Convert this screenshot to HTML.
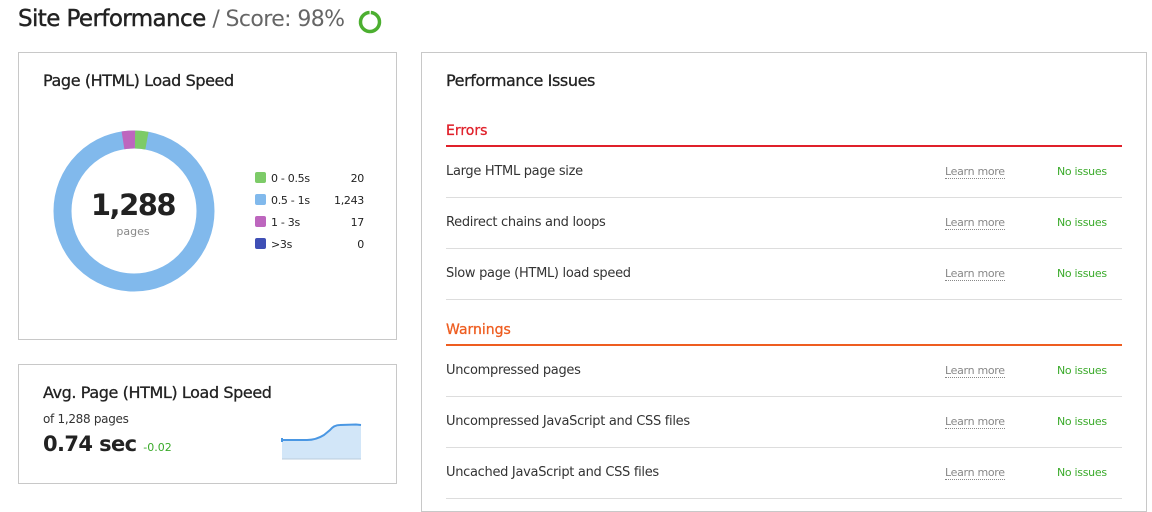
<!DOCTYPE html>
<html><head><meta charset="utf-8"><style>
*{margin:0;padding:0;box-sizing:border-box}
body{width:1152px;height:499px;overflow:hidden;background:#fff;font-family:"DejaVu Sans","Liberation Sans",sans-serif;color:#222;position:relative}
.a{position:absolute;white-space:nowrap}
.box{position:absolute;border:1px solid #c8c8c8;background:#fff}
.sep{position:absolute;left:446px;width:676px;height:1px;background:#ddd}
.lbl{position:absolute;left:446px;font-size:13px;color:#333;letter-spacing:-0.3px}
.lm{position:absolute;left:945px;font-size:11px;color:#888;border-bottom:1px dotted #888;line-height:13px;letter-spacing:-0.3px}
.ni{position:absolute;left:1057px;font-size:11px;color:#3aaa2a;letter-spacing:-0.3px}
</style></head><body>
<div class="a" style="left:18px;top:6px;font-size:23px;color:#222;letter-spacing:-0.6px;-webkit-text-stroke:0.4px #222">Site Performance <span style="color:#666;font-size:22px;-webkit-text-stroke:0">/ Score: 98%</span></div>
<svg class="a" style="left:357px;top:9px" width="26" height="26"><circle cx="13" cy="13" r="9.5" fill="none" stroke="#4caf30" stroke-width="3.5" stroke-dasharray="58 2" transform="rotate(-85 13 13)"/></svg>

<div class="box" style="left:18px;top:52px;width:379px;height:288px"></div>
<div class="a" style="left:43px;top:71px;font-size:16px;letter-spacing:-0.4px;-webkit-text-stroke:0.3px #222">Page (HTML) Load Speed</div>
<svg class="a" style="left:53px;top:130px" width="162" height="162">
<g transform="rotate(-90 81 81)">
<circle cx="81" cy="81" r="71.5" fill="none" stroke="#81b9ec" stroke-width="18"/>
<circle cx="81" cy="81" r="71.5" fill="none" stroke="#7dcb68" stroke-width="18" stroke-dasharray="12 437" stroke-dashoffset="-1"/>
<circle cx="81" cy="81" r="71.5" fill="none" stroke="#bd66be" stroke-width="18" stroke-dasharray="12 437" stroke-dashoffset="11"/>
</g></svg>
<div class="a" style="left:53px;top:188px;width:160px;text-align:center;font-size:29px;font-weight:bold;letter-spacing:-1.5px">1,288</div>
<div class="a" style="left:53px;top:225px;width:160px;text-align:center;font-size:11px;color:#888">pages</div>
<div class="a" style="left:255px;top:168px;font-size:11px;line-height:22px;letter-spacing:-0.3px">
<div><span style="display:inline-block;width:11px;height:11px;background:#7dcb68;border-radius:2px;vertical-align:-1px;margin-right:5px"></span>0 - 0.5s</div>
<div><span style="display:inline-block;width:11px;height:11px;background:#81b9ec;border-radius:2px;vertical-align:-1px;margin-right:5px"></span>0.5 - 1s</div>
<div><span style="display:inline-block;width:11px;height:11px;background:#bd66be;border-radius:2px;vertical-align:-1px;margin-right:5px"></span>1 - 3s</div>
<div><span style="display:inline-block;width:11px;height:11px;background:#3f4fb5;border-radius:2px;vertical-align:-1px;margin-right:5px"></span>&gt;3s</div>
</div>
<div class="a" style="left:314px;top:168px;width:50px;text-align:right;font-size:11px;line-height:22px;letter-spacing:-0.3px">20<br>1,243<br>17<br>0</div>

<div class="box" style="left:18px;top:364px;width:379px;height:120px"></div>
<div class="a" style="left:43px;top:383px;font-size:16px;letter-spacing:-0.4px;-webkit-text-stroke:0.3px #222">Avg. Page (HTML) Load Speed</div>
<div class="a" style="left:43px;top:412px;font-size:12px;color:#333;letter-spacing:-0.3px">of 1,288 pages</div>
<div class="a" style="left:43px;top:432px;font-size:21px;font-weight:bold;letter-spacing:-0.6px">0.74 sec <span style="font-size:11px;font-weight:normal;color:#3aaa2a;letter-spacing:0">-0.02</span></div>
<svg class="a" style="left:280px;top:420px" width="84" height="42">
<path d="M2 20 L27 20 Q36 20 44 15 L50 10 Q54 5 60 5 L81 4 L81 39 L2 39Z" fill="#d2e6f8"/>
<path d="M2 18 L2 22 M2 20 L27 20 Q36 20 44 15 L50 10 Q54 5 60 5 L76 4.5 L81 5" fill="none" stroke="#4a97e3" stroke-width="2"/>
<line x1="2" y1="39" x2="81" y2="39" stroke="#bcd" stroke-width="1"/>
</svg>

<div class="box" style="left:421px;top:52px;width:726px;height:460px"></div>
<div class="a" style="left:446px;top:71px;font-size:16px;letter-spacing:-0.4px;-webkit-text-stroke:0.3px #222">Performance Issues</div>
<div class="a" style="left:446px;top:123px;font-size:14px;color:#e0202a;-webkit-text-stroke:0.3px #e0202a">Errors</div>
<div class="a" style="left:446px;top:145px;width:676px;height:2px;background:#e0202a"></div>
<div class="lbl" style="top:164px">Large HTML page size</div><div class="lm" style="top:165px">Learn more</div><div class="ni" style="top:165px">No issues</div>
<div class="sep" style="top:197px"></div>
<div class="lbl" style="top:215px">Redirect chains and loops</div><div class="lm" style="top:216px">Learn more</div><div class="ni" style="top:216px">No issues</div>
<div class="sep" style="top:248px"></div>
<div class="lbl" style="top:266px">Slow page (HTML) load speed</div><div class="lm" style="top:267px">Learn more</div><div class="ni" style="top:267px">No issues</div>
<div class="sep" style="top:299px"></div>
<div class="a" style="left:446px;top:322px;font-size:14px;color:#ee5d20;-webkit-text-stroke:0.3px #ee5d20">Warnings</div>
<div class="a" style="left:446px;top:344px;width:676px;height:2px;background:#ee5d20"></div>
<div class="lbl" style="top:363px">Uncompressed pages</div><div class="lm" style="top:364px">Learn more</div><div class="ni" style="top:364px">No issues</div>
<div class="sep" style="top:396px"></div>
<div class="lbl" style="top:414px">Uncompressed JavaScript and CSS files</div><div class="lm" style="top:415px">Learn more</div><div class="ni" style="top:415px">No issues</div>
<div class="sep" style="top:447px"></div>
<div class="lbl" style="top:465px">Uncached JavaScript and CSS files</div><div class="lm" style="top:466px">Learn more</div><div class="ni" style="top:466px">No issues</div>
<div class="sep" style="top:498px"></div>
</body></html>
